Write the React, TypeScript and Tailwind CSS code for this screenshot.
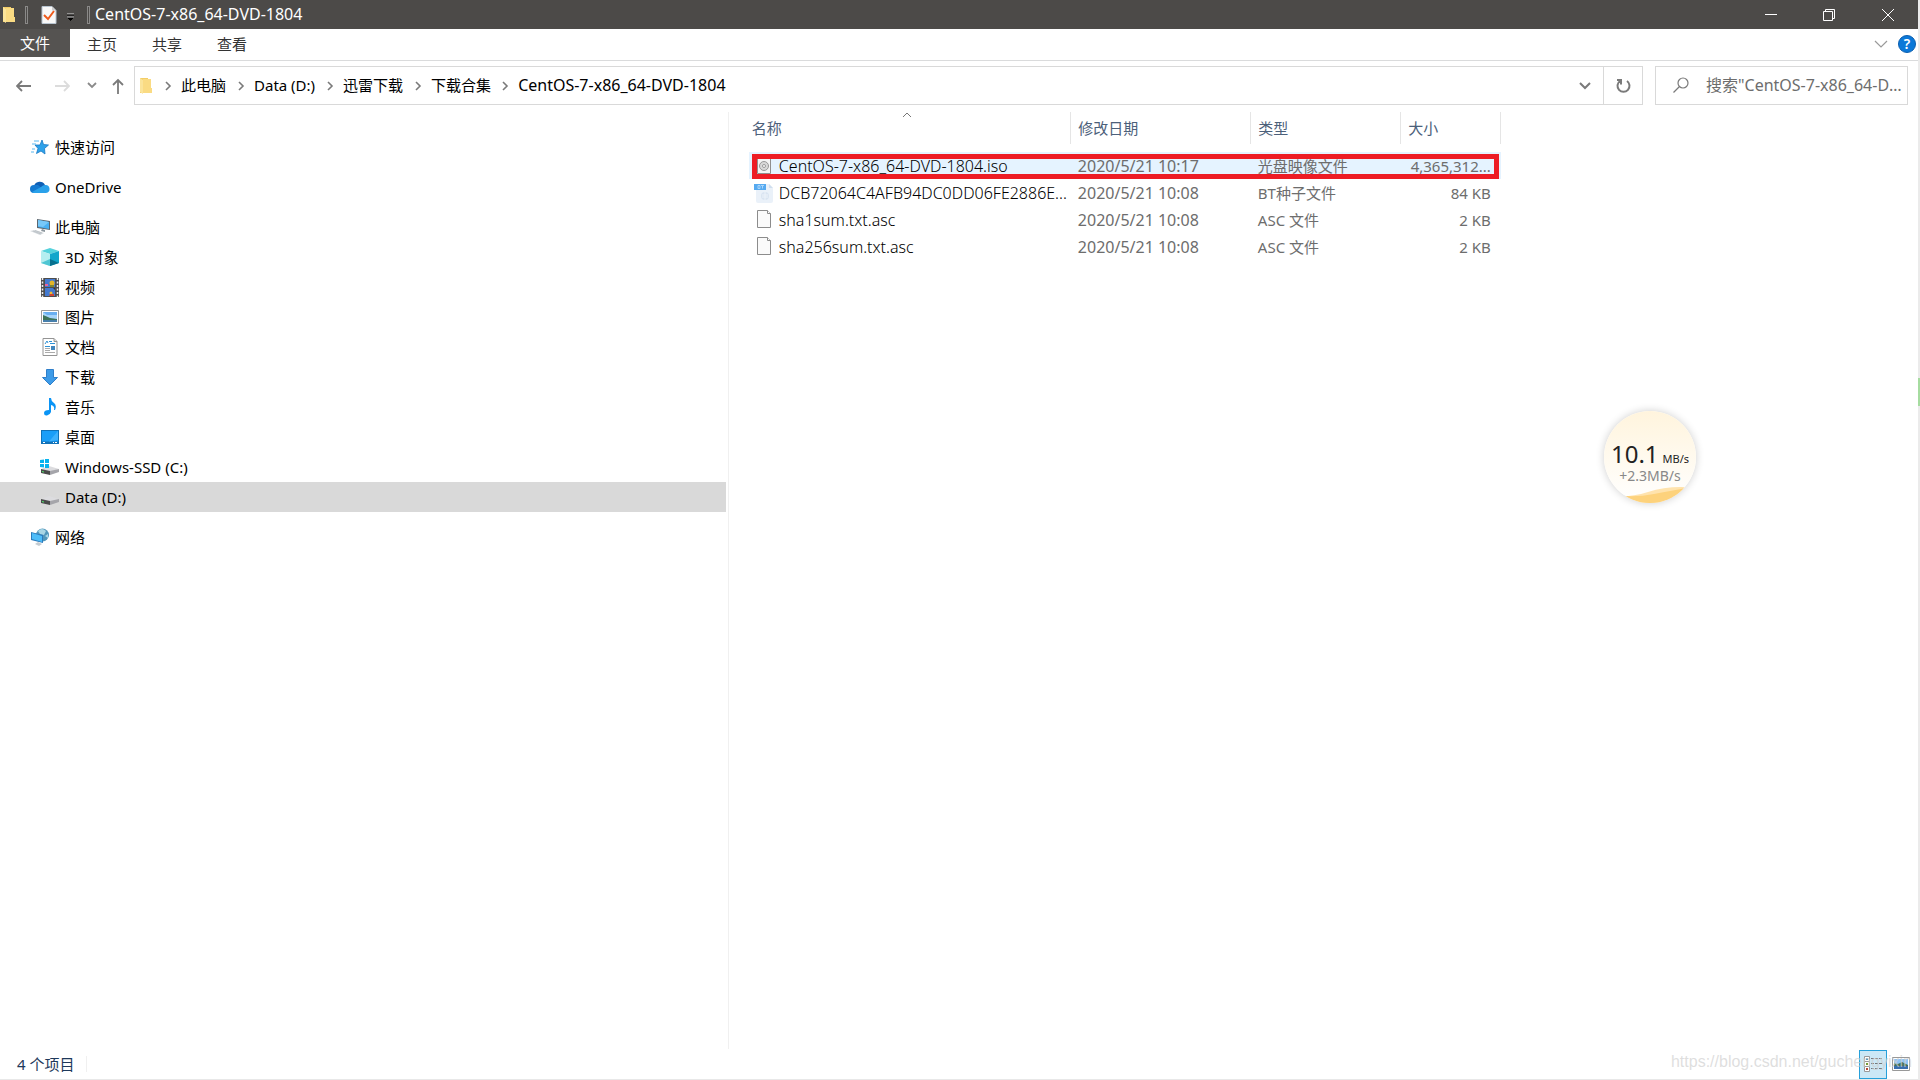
import type { ReactNode } from "react";

interface NavItem {
  label: string;
  icon: ReactNode;
  child?: boolean;
  active?: boolean;
}

interface FileRow {
  name: string;
  date: string;
  type: string;
  size: string;
  icon: ReactNode;
  selected?: boolean;
}

const FolderIcon = () => (
  <svg width="14" height="18" viewBox="0 0 14 18">
    <path d="M1 1h8v15H1z" fill="#f3cd66" />
    <path d="M1 1l3 2v14l-3-2z" fill="#fbe49a" />
    <path d="M4 2h8v9h1v5H4z" fill="#fadb83" />
  </svg>
);

const CrumbArrow = () => (
  <svg width="8" height="10" viewBox="0 0 8 10" fill="none" stroke="#7a7a7a" strokeWidth="1.6">
    <path d="M2 1l4 4-4 4" />
  </svg>
);

const StarIcon = () => (
  <svg width="20" height="20" viewBox="0 0 20 20">
    <path d="M12 3l1.500 4.500 5 .5-4 3.500.5 5.500-4-3-4.500 2.500 1.500-5-3-3.500h5z" fill="#2ea2ea" stroke="#1879c4" strokeWidth=".8" />
    <path d="M4 4h5M2 7h4M2 12h3M1 15h3" stroke="#5bb7ee" strokeWidth="1" />
  </svg>
);

const CloudIcon = () => (
  <svg width="20" height="14" viewBox="0 0 20 14">
    <path d="M4 6a6 6 0 0 1 11-1l1 3-10 2z" fill="#0f5fb5" />
    <path d="M4 5a4 4 0 0 0 0 8h4l5-4-5-4z" fill="#1479d0" />
    <path d="M15 5a4 4 0 0 1 1 8H4a4 4 0 0 1-2-1l9-5q2-2 4-2z" fill="#2aa1ea" />
  </svg>
);

const PcIcon = () => (
  <svg width="20" height="18" viewBox="0 0 20 18">
    <path d="M7 1l13 2v9L7 10z" fill="#5c6770" />
    <path d="M8 2l11 2v7L8 9z" fill="#49b0f2" />
    <path d="M8 2l11 2-6 5-5-1z" fill="#78c8f8" />
    <path d="M12 11l3 1v2l-4-1z" fill="#8d979e" />
    <path d="M0 13l5-1 9 3-4 2z" fill="#d3d8dc" />
    <path d="M3 13l8 3M5 12.500l7 2.500" stroke="#aeb5ba" strokeWidth=".6" />
  </svg>
);

const CubeIcon = () => (
  <svg width="18" height="18" viewBox="0 0 18 18">
    <path d="M9 0l9 3-9 3-9-3z" fill="#55d2dc" />
    <path d="M0 3l9 3v12l-9-3z" fill="#b5eef0" />
    <path d="M18 3L9 6v12l9-3z" fill="#11a6cb" />
    <path d="M0 15l9-4v7z" fill="#4fc6d3" />
    <path d="M18 15l-9-4v7z" fill="#08718f" />
  </svg>
);

const VideoIcon = () => (
  <svg width="18" height="19" viewBox="0 0 18 19">
    <path d="M0 0h18v19H0z" fill="#4d4d4d" />
    <path d="M4 1h10v8H4zM4 10h10v8H4z" fill="#4379cf" />
    <path d="M1.500 0v19M16.500 0v19" stroke="#eee" strokeWidth="1.500" strokeDasharray="2 1.500" />
    <circle cx="11" cy="5" r="2.500" fill="#e3b525" />
    <path d="M4 6h3v2H4z" fill="#e8639d" />
    <path d="M9 7h4v2H9z" fill="#7c8531" />
    <circle cx="10" cy="15" r="1.500" fill="#f0bb30" />
    <path d="M9 16h4v2H8z" fill="#ce4534" />
    <path d="M12 10l2 2v-2z" fill="#333" />
  </svg>
);

const PictureIcon = () => (
  <svg width="18" height="14" viewBox="0 0 18 14">
    <path d="M.5.5h17v13H.5z" fill="#fff" stroke="#9b9b9b" />
    <path d="M2 2h14v10H2z" fill="#a5d3fa" />
    <path d="M2 2h14v3H6z" fill="#68aef0" />
    <path d="M2 5q5 2 7 3l7 1v3H2z" fill="#3d7359" />
    <path d="M2 10h14v2H2z" fill="#477fac" />
  </svg>
);

const DocIcon = () => (
  <svg width="16" height="18" viewBox="0 0 16 18">
    <path d="M1 .5h11l3 3v14H1z" fill="#fff" stroke="#949494" />
    <path d="M12 .5v3h3" fill="#ddd" stroke="#949494" />
    <path d="M3 6l2-3 1 2M7 3.500h3M8 5.500h5M3 8.500h5" stroke="#2f92d6" fill="none" />
    <path d="M9 8h4v4H9z" fill="#4186bd" />
    <path d="M3 10.500h5M3 12.500h5M3 14.500h10" stroke="#aaa" />
  </svg>
);

const DownIcon = () => (
  <svg width="16" height="17" viewBox="0 0 16 17">
    <path d="M4.500.5h7v8h4L8 16 .5 8.500h4z" fill="#3d9be8" stroke="#2f7fca" />
  </svg>
);

const MusicIcon = () => (
  <svg width="12" height="18" viewBox="0 0 12 18">
    <path d="M5 0h2q0 3 3 5t1 7H10q1-4-3-5v7q-1 3-4 3.500T0 15t5-3z" fill="#0a94f5" />
  </svg>
);

const DesktopIcon = () => (
  <svg width="18" height="14" viewBox="0 0 18 14">
    <path d="M0 0h18v14H0z" fill="#1172b8" />
    <path d="M1 1h16v10.500H1z" fill="#1a9ef8" />
    <path d="M17 1v9L8 11.500z" fill="#3eb1fd" />
    <path d="M2 12.500h2M12 12.500h1M14 12.500h2" stroke="#fff" />
  </svg>
);

const DriveIcon = ({ system }: { system?: boolean }) => (
  <svg width="20" height="16" viewBox="0 0 20 16">
    <path d="M1 10l8-3 10 3-9 3z" fill="#dcdcdf" />
    <path d="M1 10l9 2v4l-9-2z" fill="#4b4b4b" />
    <path d="M10 12l9-2v3l-9 3z" fill="#a5a5aa" />
    <path d="M2 12.500l2 .5" stroke="#4be36a" />
    {system && <path d="M0 1l4-.5V4H0zM5 0h4v4H5zM0 5h4v3.500L0 8zM5 5h4v4H5z" fill="#06b3ef" />}
  </svg>
);

const NetworkIcon = () => (
  <svg width="20" height="18" viewBox="0 0 20 18">
    <circle cx="12.500" cy="7" r="6.500" fill="#5297bb" />
    <path d="M8 3q4-4 8 0l-2 4-4-1zM15 8l3-2v4z" fill="#a9d6e5" />
    <path d="M1 4l12 3v8L1 12z" fill="#2b7bbd" />
    <path d="M2 5l10 3v6L2 11z" fill="#4dbcf8" />
    <path d="M5 16l3-2 4 2-3 2z" fill="#c3cbd1" />
  </svg>
);

const IsoIcon = () => (
  <svg width="18" height="20" viewBox="0 0 18 20">
    <path d="M2.500.5h13v17h-13z" fill="#f4f4f4" stroke="#8f8f8f" />
    <circle cx="9" cy="10" r="4.500" fill="#d8d8d8" stroke="#999" />
    <circle cx="9" cy="10" r="1.500" fill="#fff" stroke="#999" />
  </svg>
);

const TorrentIcon = () => (
  <svg width="20" height="20" viewBox="0 0 20 20">
    <path d="M2 1h13l4 4v13q0 2-2 2H4q-2 0-2-2z" fill="#eaf1f9" />
    <path d="M15 1l4 4h-4z" fill="#cfdeee" />
    <circle cx="11" cy="13" r="4" fill="#d9e4f1" />
    <path d="M8 12h6M8 14h6M11 9v8" stroke="#edf3fa" />
    <path d="M0 1h12v6H0z" fill="#56aaf0" />
    <path d="M4 2.500v3h2v-3zM7 2.500h3M8.500 2.500v3" stroke="#a9d5fb" fill="none" />
  </svg>
);

const BlankFileIcon = () => (
  <svg width="18" height="20" viewBox="0 0 18 20">
    <path d="M2.500.5h10l3 3v14h-13z" fill="#fafafa" stroke="#8c8c8c" />
    <path d="M12.500.5v3h3" fill="#fff" stroke="#8c8c8c" />
  </svg>
);

const navGroups: NavItem[][] = [
  [{ label: "快速访问", icon: <StarIcon /> }],
  [{ label: "OneDrive", icon: <CloudIcon /> }],
  [
    { label: "此电脑", icon: <PcIcon /> },
    { label: "3D 对象", icon: <CubeIcon />, child: true },
    { label: "视频", icon: <VideoIcon />, child: true },
    { label: "图片", icon: <PictureIcon />, child: true },
    { label: "文档", icon: <DocIcon />, child: true },
    { label: "下载", icon: <DownIcon />, child: true },
    { label: "音乐", icon: <MusicIcon />, child: true },
    { label: "桌面", icon: <DesktopIcon />, child: true },
    { label: "Windows-SSD (C:)", icon: <DriveIcon system />, child: true },
    { label: "Data (D:)", icon: <DriveIcon />, child: true, active: true },
  ],
  [{ label: "网络", icon: <NetworkIcon /> }],
];

const crumbs = ["此电脑", "Data (D:)", "迅雷下载", "下载合集"];
const currentFolder = "CentOS-7-x86_64-DVD-1804";

const files: FileRow[] = [
  { name: "CentOS-7-x86_64-DVD-1804.iso", date: "2020/5/21 10:17", type: "光盘映像文件", size: "4,365,312...", icon: <IsoIcon />, selected: true },
  { name: "DCB72064C4AFB94DC0DD06FE2886E...", date: "2020/5/21 10:08", type: "BT种子文件", size: "84 KB", icon: <TorrentIcon /> },
  { name: "sha1sum.txt.asc", date: "2020/5/21 10:08", type: "ASC 文件", size: "2 KB", icon: <BlankFileIcon /> },
  { name: "sha256sum.txt.asc", date: "2020/5/21 10:08", type: "ASC 文件", size: "2 KB", icon: <BlankFileIcon /> },
];

function TitleBar() {
  return (
    <header className="flex h-[29px] items-center bg-[#4c4a48] text-white">
      <div className="flex flex-1 items-center pl-[2px]">
        <FolderIcon />
        <span className="ml-[9px] h-[18px] w-[3px] border border-[#8a8988]" />
        <button aria-label="属性" className="ml-[13px]">
          <svg width="16" height="18" viewBox="0 0 16 18">
            <path d="M1 .5h10l4 4v13H1z" fill="#f8f8f8" stroke="#b8c4d0" />
            <path d="M11 .5v4h4" fill="#ccc" />
            <path d="M3 9l4 4 6-8" stroke="#ee5a1c" strokeWidth="2" fill="none" />
          </svg>
        </button>
        <button aria-label="自定义快速访问工具栏" className="ml-[9px] pt-1">
          <svg width="9" height="8" viewBox="0 0 9 8">
            <path d="M1 1h7" stroke="#ddd" />
            <path d="M1 2h7M1 4l3.500 3.500L8 4z" stroke="#000" fill="#000" />
            <path d="M1 4h7" stroke="#ddd" />
          </svg>
        </button>
        <span className="ml-3 h-[18px] w-[3px] border border-[#8a8988]" />
        <h1 className="ml-[5px] pb-[2px] text-base leading-5">{currentFolder}</h1>
      </div>
      <button aria-label="最小化" className="flex h-full w-[58px] items-center justify-center">
        <svg width="12" height="12" viewBox="0 0 12 12" stroke="#fff"><path d="M0 5.500h12" /></svg>
      </button>
      <button aria-label="还原" className="flex h-full w-[58px] items-center justify-center">
        <svg width="12" height="12" viewBox="0 0 12 12" stroke="#fff" fill="none">
          <path d="M.5 2.500h9v9h-9zM2.500 2.500v-2h9v9h-2" />
        </svg>
      </button>
      <button aria-label="关闭" className="flex h-full w-[60px] items-center justify-center">
        <svg width="12" height="12" viewBox="0 0 12 12" stroke="#fff"><path d="M0 0l12 12M12 0L0 12" /></svg>
      </button>
    </header>
  );
}

function RibbonTabs() {
  return (
    <nav className="flex h-8 items-start border-b border-[#dadbdc] text-[#333]">
      <button className="h-7 w-[70px] bg-[#555351] text-white">文件</button>
      <button className="h-[30px] w-16">主页</button>
      <button className="h-[30px] w-[66px]">共享</button>
      <button className="h-[30px] w-16">查看</button>
      <div className="ml-auto flex h-[30px] items-center gap-2.5 pr-[2px]">
        <button aria-label="展开功能区">
          <svg width="14" height="8" viewBox="0 0 14 8" fill="none" stroke="#9a9a9a" strokeWidth="1.200"><path d="M1 1l6 6 6-6" /></svg>
        </button>
        <button aria-label="帮助" className="flex size-[18px] items-center justify-center rounded-full border border-[#0b5fb0] bg-[#0b78d8] text-sm font-semibold text-white">
          ?
        </button>
      </div>
    </nav>
  );
}

function AddressBar() {
  return (
    <div className="flex h-[39px] items-stretch pr-2.5">
      <div className="flex w-[134px] items-center pl-4">
        <button aria-label="后退">
          <svg width="16" height="12" viewBox="0 0 16 12" fill="none" stroke="#7a7a7a" strokeWidth="1.800"><path d="M15 6H1M6 1L1 6l5 5" /></svg>
        </button>
        <button aria-label="前进" className="ml-[22px]" disabled>
          <svg width="16" height="12" viewBox="0 0 16 12" fill="none" stroke="#dcdcdc" strokeWidth="1.800"><path d="M1 6h14M10 1l5 5-5 5" /></svg>
        </button>
        <button aria-label="最近浏览的位置" className="ml-[17px]">
          <svg width="10" height="7" viewBox="0 0 10 7" fill="none" stroke="#8a8a8a" strokeWidth="1.800"><path d="M1 1l4 4 4-4" /></svg>
        </button>
        <button aria-label="上移" className="ml-[14px]">
          <svg width="14" height="18" viewBox="0 0 14 18" fill="none" stroke="#7a7a7a" strokeWidth="1.800"><path d="M7 17V3M2 8l5-5 5 5" /></svg>
        </button>
      </div>
      <div className="flex flex-1 items-stretch border border-[#d9d9d9]">
        <div className="flex flex-1 items-center pl-1">
          <FolderIcon />
          {crumbs.map((crumb) => (
            <div key={crumb} className="flex items-center">
              <span className="ml-[9px] flex w-3 justify-center">
                <CrumbArrow />
              </span>
              <button className="ml-[7px] pb-[2px]">{crumb}</button>
            </div>
          ))}
          <div className="flex items-center">
            <span className="ml-2 flex w-3 justify-center">
              <CrumbArrow />
            </span>
            <button className="ml-[7px] pb-[2px] text-base leading-5">{currentFolder}</button>
          </div>
        </div>
        <button aria-label="以前的位置" className="flex w-9 items-center justify-center">
          <svg width="12" height="8" viewBox="0 0 12 8" fill="none" stroke="#7a7a7a" strokeWidth="2"><path d="M1 1l5 5 5-5" /></svg>
        </button>
        <button aria-label="刷新" className="flex w-[39px] items-center justify-center border-l border-[#d9d9d9]">
          <svg width="16" height="16" viewBox="0 0 16 16" fill="none" stroke="#7a7a7a" strokeWidth="2">
            <path d="M12 3a6 6 0 1 1-7 0M2 2h4v4.500" />
          </svg>
        </button>
      </div>
      <label className="ml-3 flex w-[253px] items-center border border-[#d9d9d9] pl-4">
        <svg width="18" height="17" viewBox="0 0 18 17" fill="none" stroke="#7a7a7a" strokeWidth="1.200">
          <circle cx="11" cy="6" r="5" />
          <path d="M7.500 9.500l-6 6" />
        </svg>
        <input
          type="text"
          aria-label="搜索"
          placeholder={'搜索"CentOS-7-x86_64-DVD-1804"'}
          className="mr-[2px] ml-4 min-w-0 flex-1 pb-[2px] text-base text-ellipsis outline-none placeholder:text-[#6d6d6d]"
        />
      </label>
    </div>
  );
}

function NavPane() {
  return (
    <aside className="flex w-[38%] shrink-0 flex-col gap-2.5 border-r border-[#f0f0f0] pt-5 pr-[2px]">
      {navGroups.map((group) => (
        <ul key={group[0].label}>
          {group.map((item) => (
            <li key={item.label}>
              <button
                className={`flex h-[30px] w-full items-center gap-[5px] ${item.child ? "pl-10" : "pl-[30px]"} ${
                  item.active ? "bg-[#d9d9d9]" : ""
                }`}
              >
                <span className="flex w-5 justify-center">{item.icon}</span>
                {item.label}
              </button>
            </li>
          ))}
        </ul>
      ))}
    </aside>
  );
}

function FileList() {
  return (
    <main className="flex-1 pl-5">
      <div className="relative w-[752px]">
        <table className="w-full table-fixed border-collapse text-left text-[#6d6d6d]">
          <colgroup>
            <col className="w-[322px]" />
            <col className="w-[180px]" />
            <col className="w-[150px]" />
            <col className="w-[100px]" />
          </colgroup>
          <thead>
            <tr className="h-8 text-[#4c607a]">
              <th className="relative border-r border-[#e5e5e5] pl-[3px] font-normal">
                名称
                <svg className="absolute top-0 left-1/2 -ml-2" width="10" height="6" viewBox="0 0 10 6" fill="none" stroke="#777">
                  <path d="M1 5l4-4 4 4" />
                </svg>
              </th>
              <th className="border-r border-[#e5e5e5] pl-[7px] font-normal">修改日期</th>
              <th className="border-r border-[#e5e5e5] pl-[7px] font-normal">类型</th>
              <th className="border-r border-[#e5e5e5] pl-[7px] font-normal">大小</th>
            </tr>
          </thead>
          <tbody>
            <tr className="h-2" />
            {files.map((file) => (
              <tr key={file.name} className={`h-[27px] ${file.selected ? "bg-[#e5f3ff]" : ""}`}>
                <td className="pl-[5px]">
                  <div className="flex items-center gap-[5px] text-base leading-5 font-[350] text-black">
                    <span className="flex w-5 shrink-0 justify-center">{file.icon}</span>
                    <span className="whitespace-nowrap">{file.name}</span>
                  </div>
                </td>
                <td className="pl-[7px] text-base leading-5">{file.date}</td>
                <td className="pl-[7px]">{file.type}</td>
                <td className="pr-2.5 text-right whitespace-nowrap">{file.size}</td>
              </tr>
            ))}
          </tbody>
        </table>
        {/* highlight frame around the iso image */}
        <div className="pointer-events-none absolute top-[42px] right-[2px] left-[3px] h-[25px] border-[5px] border-[#ed1c24]" />
      </div>
    </main>
  );
}

function SpeedBall() {
  return (
    <div className="absolute top-[411px] right-[222px] flex size-[92px] flex-col items-center overflow-hidden rounded-full bg-linear-to-b from-[#fff4dd] to-white pt-[29px] shadow-[0_0_8px_rgba(0,0,0,0.2)]">
      <svg className="absolute inset-x-0 bottom-0" width="92" height="18" viewBox="0 0 92 18">
        <path d="M0 10q22 4 44-3t48-4v15H0z" fill="#ffe3ad" />
        <path d="M0 8q25 6 50 1t42-8v17H0z" fill="#fdd27c" />
      </svg>
      <p className="flex items-baseline gap-1 text-[#222]">
        <span className="text-2xl leading-7">10.1</span>
        <span className="text-[11px] leading-4">MB/s</span>
      </p>
      <p className="relative text-sm leading-4 text-[#888]">+2.3MB/s</p>
    </div>
  );
}

function StatusBar() {
  return (
    <footer className="relative flex h-[31px] items-center border-b border-[#e8e8e8] pl-[17px] text-[#1e395b]">
      <span className="border-r border-[#f0f0f0] pr-3 leading-4">4 个项目</span>
      <button aria-label="详细信息" className="ml-auto flex h-[29px] w-7 items-center justify-center border border-[#26a0da] bg-[#cbe8f6]">
        <svg width="18" height="16" viewBox="0 0 18 16">
          <path d="M.5.5h5v15h-5zM.5 5.500h5M.5 10.500h5" fill="#fff" stroke="#999" />
          <path d="M2 2h2v2H2z" fill="#4a90b8" />
          <path d="M2 7h2v2H2z" fill="#789b34" />
          <path d="M2 12h2v2H2z" fill="#b94632" />
          <path d="M7 2.500h11M7 7.500h11M7 12.500h11" stroke="#777" strokeDasharray="3 1" />
        </svg>
      </button>
      <button aria-label="大缩略图" className="mr-2 ml-[5px]">
        <svg width="18" height="14" viewBox="0 0 18 14">
          <path d="M.5.5h17v13H.5z" fill="#fff" stroke="#999" />
          <path d="M2 2h14v10H2z" fill="#8dc4f5" />
          <path d="M2 6l4 1 4-2 6 3v2H2z" fill="#3f705c" />
          <path d="M2 9h14v3H2z" fill="#386eae" />
        </svg>
      </button>
      <span className="pointer-events-none absolute right-1.5 bottom-[5px] font-['Liberation_Sans',sans-serif] text-base text-[#d0d0d0]/70">
        https://blog.csdn.net/guchengyixin
      </span>
    </footer>
  );
}

export default function App() {
  return (
    <div className="relative flex min-h-screen flex-col border-r-2 border-[#ebebeb] bg-white font-['Noto_Sans','Noto_Sans_CJK_SC',sans-serif] text-[15px] leading-5 text-black">
      <TitleBar />
      <RibbonTabs />
      <div className="pt-[5px]">
        <AddressBar />
      </div>
      <div className="flex flex-1 pt-[7px]">
        <NavPane />
        <FileList />
      </div>
      <StatusBar />
      <SpeedBall />
      <div className="absolute top-[378px] -right-[2px] h-7 w-[2px] bg-[#a6dca0]" />
    </div>
  );
}
